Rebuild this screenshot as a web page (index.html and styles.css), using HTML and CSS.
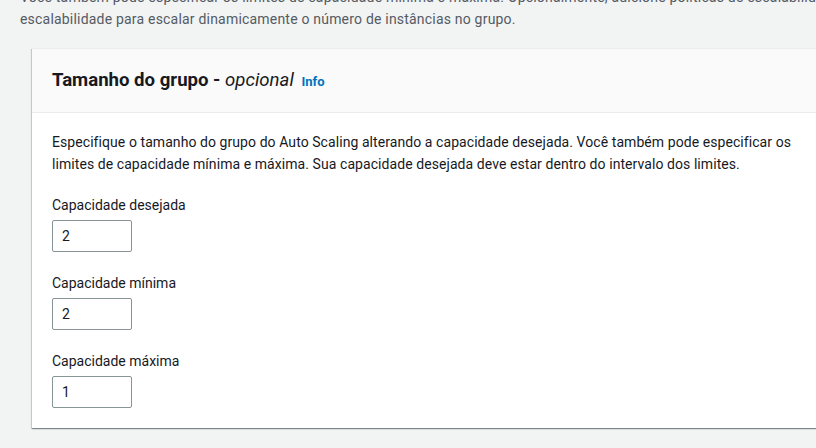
FILE: index.html
```html
<!DOCTYPE html>
<html lang="pt-BR">
<head>
<meta charset="utf-8">
<link rel="stylesheet" href="styles.css">
</head>
<body>
<p class="intro">Você também pode especificar os limites de capacidade mínima e máxima. Opcionalmente, adicione políticas de escalabilidade para escalar o grupo. Em seguida, anexe políticas de escalabilidade ao grupo para escalar<br>escalabilidade para escalar dinamicamente o número de instâncias no grupo.</p>
<section class="card">
  <header class="card-header">
    <h2 class="card-title">Tamanho do grupo - <i class="optional">opcional</i> <a class="info" href="#">Info</a></h2>
  </header>
  <div class="card-body">
    <p class="desc">Especifique o tamanho do grupo do Auto Scaling alterando a capacidade desejada. Você também pode especificar os limites de capacidade mínima e máxima. Sua capacidade desejada deve estar dentro do intervalo dos limites.</p>
    <div class="field">
      <label class="label">Capacidade desejada</label>
      <input class="num" type="text" value="2">
    </div>
    <div class="field">
      <label class="label">Capacidade mínima</label>
      <input class="num" type="text" value="2">
    </div>
    <div class="field">
      <label class="label">Capacidade máxima</label>
      <input class="num" type="text" value="1">
    </div>
  </div>
</section>
<section class="card next"></section>
</body>
</html>
```
FILE: styles.css
```css
html, body {
  margin: 0;
  padding: 0;
}
body {
  background: #f2f3f3;
  font-family: Roboto, "Liberation Sans", sans-serif;
  font-size: 14px;
  line-height: 22px;
  color: #16191f;
  overflow: hidden;
  width: 816px;
  height: 448px;
}
.intro {
  margin: -14px 0 0 0;
  padding-left: 20px;
  color: #545b64;
  white-space: nowrap;
  letter-spacing: 0.2px;
}
.card {
  margin: 18px 0 0 32px;
  width: 820px;
  background: #fff;
  box-shadow: 0 1px 1px 0 rgba(0, 28, 36, 0.3), 1px 1px 1px 0 rgba(0, 28, 36, 0.15), -1px 1px 1px 0 rgba(0, 28, 36, 0.15);
  border-top: 1px solid #eaeded;
}
.card-header {
  background: #fafafa;
  border-bottom: 1px solid #eaeded;
  height: 63px;
  display: flex;
  align-items: center;
  padding: 0 20px;
}
.card-title {
  margin: 0;
  font-size: 18.6px;
  font-weight: 700;
  line-height: 22px;
  color: #16191f;
}
.optional {
  font-weight: 400;
}
.info {
  font-size: 13px;
  font-weight: 700;
  color: #0073bb;
  text-decoration: none;
  margin-left: 3px;
}
.card-body {
  padding: 18px 20px 20px;
}
.desc {
  margin: 0 0 19px;
  width: 760px;
  letter-spacing: 0.07px;
}
.field {
  display: flex;
  flex-direction: column;
  align-items: flex-start;
  margin-bottom: 20px;
}
.field:last-child {
  margin-bottom: 0;
}
.label {
  margin-bottom: 4px;
}
.num {
  box-sizing: border-box;
  width: 80px;
  height: 32px;
  border: 1px solid #879596;
  border-radius: 2px;
  padding: 0 9px;
  font-family: inherit;
  font-size: 14px;
  color: #16191f;
  background: #fff;
  margin: 0;
}
.next {
  margin-top: 20px;
  height: 40px;
}
```
